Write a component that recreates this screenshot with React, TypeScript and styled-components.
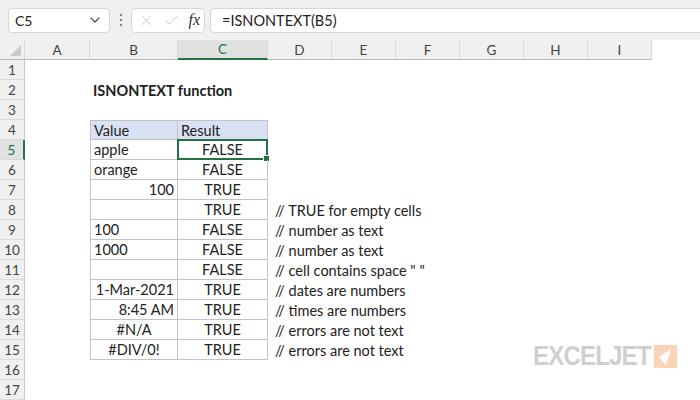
import styled, { createGlobalStyle } from "styled-components";
import { ChevronDown, X, Check } from "lucide-react";

const GlobalStyle = createGlobalStyle`
  html, body {
    margin: 0;
    padding: 0;
    background: #ffffff;
    font-family: Lato, "Liberation Sans", sans-serif;
    color: #222222;
  }
  #root {
    width: 700px;
    height: 400px;
    overflow: hidden;
    position: relative;
  }
`;

const green = "#217346";

const Toolbar = styled.div`
  height: 40px;
  background: #f0f0f0;
  display: flex;
  align-items: center;
  padding-left: 8px;
  box-sizing: border-box;
`;

const NameBox = styled.div`
  width: 102px;
  height: 25px;
  box-sizing: border-box;
  background: #fff;
  border: 1px solid #d6d6d6;
  border-radius: 4px;
  display: flex;
  align-items: center;
  justify-content: space-between;
  padding: 0 6px 0 6px;
  font-size: 14px;
  color: #222;
`;

const Dots = styled.div`
  width: 21px;
  display: flex;
  justify-content: center;
`;

const FxBox = styled.div`
  width: 74px;
  height: 25px;
  box-sizing: border-box;
  background: #fff;
  border: 1px solid #d6d6d6;
  border-radius: 4px;
  display: flex;
  align-items: center;
  padding: 0 4px 0 6px;
  gap: 8px;
`;

const Fx = styled.span`
  font-family: "Liberation Serif", serif;
  font-style: italic;
  font-size: 16px;
  color: #333;
  margin-left: 1px;
`;

const FormulaBox = styled.div`
  flex: 1;
  height: 25px;
  margin-left: 5px;
  margin-right: -10px;
  box-sizing: border-box;
  background: #fff;
  border: 1px solid #d6d6d6;
  border-radius: 4px;
  display: flex;
  align-items: center;
  padding-left: 11px;
  font-size: 14.5px;
  color: #222;
`;

const Sheet = styled.div`
  display: grid;
  grid-template-columns: 25px 65px 88px 90px 64px 64px 64px 64px 64px 64px;
  grid-auto-rows: 20px;
`;

const ColHead = styled.div<{ $active?: boolean }>`
  box-sizing: border-box;
  background: ${(p) => (p.$active ? "#e1e1e1" : "#f0f0f0")};
  border-right: 1px solid #dadada;
  border-bottom: ${(p) => (p.$active ? `2px solid ${green}` : "1px solid #b8b8b8")};
  display: flex;
  align-items: center;
  justify-content: center;
  font-size: 13.5px;
  color: ${(p) => (p.$active ? green : "#444")};
`;

const Corner = styled.div`
  box-sizing: border-box;
  background: #f0f0f0;
  border-right: 1px solid #dadada;
  border-bottom: 1px solid #b8b8b8;
  display: flex;
  align-items: flex-end;
  justify-content: flex-end;
  padding: 0 3px 3px 0;
`;

const RowHead = styled.div<{ $active?: boolean }>`
  box-sizing: border-box;
  background: ${(p) => (p.$active ? "#e1e1e1" : "#f0f0f0")};
  border-bottom: 1px solid #dadada;
  border-right: ${(p) => (p.$active ? `2px solid ${green}` : "1px solid #c8c8c8")};
  display: flex;
  align-items: center;
  justify-content: center;
  font-size: 13.5px;
  color: ${(p) => (p.$active ? green : "#444")};
`;

type Align = "left" | "right" | "center";

const Cell = styled.div<{
  $align?: Align;
  $bold?: boolean;
  $fill?: string;
  $boxed?: boolean;
  $top?: boolean;
  $left?: boolean;
}>`
  position: relative;
  box-sizing: border-box;
  display: flex;
  align-items: center;
  justify-content: ${(p) =>
    p.$align === "right" ? "flex-end" : p.$align === "center" ? "center" : "flex-start"};
  padding: 0 3px;
  font-size: 14.5px;
  font-weight: ${(p) => (p.$bold ? 700 : 400)};
  background: ${(p) => p.$fill || "transparent"};
  white-space: nowrap;
  overflow: visible;
  color: #222;
  border-right: ${(p) => (p.$boxed ? "1px solid #c0c3cc" : "none")};
  border-bottom: ${(p) => (p.$boxed ? "1px solid #c0c3cc" : "none")};
  border-top: ${(p) => (p.$boxed && p.$top ? "1px solid #c0c3cc" : "none")};
  border-left: ${(p) => (p.$boxed && p.$left ? "1px solid #c0c3cc" : "none")};
`;

const Selection = styled.div`
  position: absolute;
  left: -1px;
  top: -1px;
  right: -1px;
  bottom: -1px;
  border: 2px solid ${green};
  pointer-events: none;
  &::after {
    content: "";
    position: absolute;
    right: -4px;
    bottom: -4px;
    width: 5px;
    height: 5px;
    background: ${green};
    border: 1px solid #fff;
  }
`;

const Logo = styled.div`
  position: absolute;
  left: 533px;
  top: 344px;
  display: flex;
  align-items: center;
  gap: 3px;
`;

const LogoText = styled.span`
  font-family: "Liberation Sans", sans-serif;
  font-weight: 700;
  font-size: 28px;
  letter-spacing: -1px;
  color: #cfcfcf;
  display: inline-block;
  transform: scaleX(0.86);
  transform-origin: left center;
  margin-right: -19px;
  line-height: 24px;
`;

const LogoMark = styled.div`
  width: 23px;
  height: 23px;
  background: #f9d4b9;
  display: flex;
  align-items: center;
  justify-content: center;
`;

const cols = ["A", "B", "C", "D", "E", "F", "G", "H", "I", "J"];

type Row = { b?: string; bAlign?: Align; c?: string; note?: string };

const data: Row[] = [
  { b: "apple", c: "FALSE" },
  { b: "orange", c: "FALSE" },
  { b: "100", bAlign: "right", c: "TRUE" },
  { b: "", c: "TRUE", note: "// TRUE for empty cells" },
  { b: "100", c: "FALSE", note: "// number as text" },
  { b: "1000", c: "FALSE", note: "// number as text" },
  { b: "", c: "FALSE", note: '// cell contains space " "' },
  { b: "1-Mar-2021", bAlign: "right", c: "TRUE", note: "// dates are numbers" },
  { b: "8:45 AM", bAlign: "right", c: "TRUE", note: "// times are numbers" },
  { b: "#N/A", bAlign: "center", c: "TRUE", note: "// errors are not text" },
  { b: "#DIV/0!", bAlign: "center", c: "TRUE", note: "// errors are not text" },
];

function Blanks({ n }: { n: number }) {
  return (
    <>
      {Array.from({ length: n }).map((_, i) => (
        <Cell key={i} />
      ))}
    </>
  );
}

function SheetRow({ num }: { num: number }) {
  const head = <RowHead $active={num === 5}>{num}</RowHead>;

  if (num === 2) {
    return (
      <>
        {head}
        <Cell />
        <Cell $bold>ISNONTEXT function</Cell>
        <Blanks n={7} />
      </>
    );
  }

  if (num === 4) {
    return (
      <>
        {head}
        <Cell />
        <Cell $boxed $top $left $fill="#d9e1f2">Value</Cell>
        <Cell $boxed $top $fill="#d9e1f2">Result</Cell>
        <Blanks n={6} />
      </>
    );
  }

  if (num >= 5 && num <= 15) {
    const r = data[num - 5];
    return (
      <>
        {head}
        <Cell />
        <Cell $boxed $left $align={r.bAlign}>
          {r.b}
        </Cell>
        <Cell $boxed $align="center">
          {r.c}
          {num === 5 && <Selection />}
        </Cell>
        <Cell style={{ paddingLeft: 7 }}>{r.note}</Cell>
        <Blanks n={5} />
      </>
    );
  }

  return (
    <>
      {head}
      <Blanks n={9} />
    </>
  );
}

export default function App() {
  return (
    <>
      <GlobalStyle />
      <Toolbar>
        <NameBox>
          <span>C5</span>
          <ChevronDown size={16} color="#444" strokeWidth={1.6} />
        </NameBox>
        <Dots>
          <svg width="4" height="14" viewBox="0 0 4 14">
            <circle cx="2" cy="2" r="1.2" fill="#888" />
            <circle cx="2" cy="7" r="1.2" fill="#888" />
            <circle cx="2" cy="12" r="1.2" fill="#888" />
          </svg>
        </Dots>
        <FxBox>
          <X size={17} color="#c4c4c4" strokeWidth={1.3} />
          <Check size={17} color="#c4c4c4" strokeWidth={1.3} />
          <Fx>fx</Fx>
        </FxBox>
        <FormulaBox>=ISNONTEXT(B5)</FormulaBox>
      </Toolbar>
      <Sheet>
        <Corner>
          <svg width="11" height="11" viewBox="0 0 11 11">
            <polygon points="11,0 11,11 0,11" fill="#c9c9c9" />
          </svg>
        </Corner>
        {cols.slice(0, 9).map((c) => (
          <ColHead key={c} $active={c === "C"}>
            {c}
          </ColHead>
        ))}
        {Array.from({ length: 17 }).map((_, i) => (
          <SheetRow key={i} num={i + 1} />
        ))}
      </Sheet>
      <Logo>
        <LogoText>EXCELJET</LogoText>
        <LogoMark>
          <svg width="23" height="23" viewBox="0 0 23 23">
            <polygon points="5,12 17,4 12,20" fill="#ffffff" />
          </svg>
        </LogoMark>
      </Logo>
    </>
  );
}
